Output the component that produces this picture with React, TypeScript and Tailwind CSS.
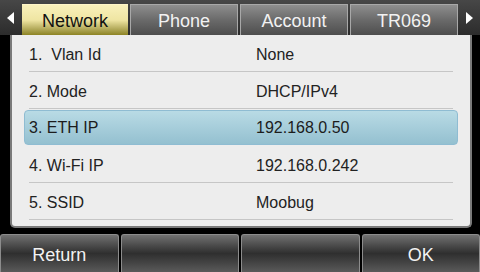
const tabs = ["Network", "Phone", "Account", "TR069"];

const rows = [
  { label: "1.  Vlan Id", value: "None" },
  { label: "2. Mode", value: "DHCP/IPv4" },
  { label: "3. ETH IP", value: "192.168.0.50" },
  { label: "4. Wi-Fi IP", value: "192.168.0.242" },
  { label: "5. SSID", value: "Moobug" },
];

const selected = 2;

const softKeys = ["Return", "", "", "OK"];

export default function App() {
  return (
    <div className="w-[480px] h-[272px] bg-black overflow-hidden flex flex-col font-['Liberation_Sans',Arial,sans-serif]">
      {/* Tab bar */}
      <div className="h-[35px] flex items-end bg-gradient-to-b from-[#474747] to-[#2c2c2c]">
        <div className="w-[22px] h-full flex items-center justify-center">
          <svg width="8" height="12" viewBox="0 0 8 12">
            <path d="M7 0 L0 6 L7 12 Z" fill="#fff" />
          </svg>
        </div>
        <div className="flex-1 flex gap-[2px] h-[31px]">
          {tabs.map((t, i) => (
            <div
              key={t}
              className={
                i === 0
                  ? "flex-1 flex items-center justify-center pt-[3px] text-[18px] text-[#111] bg-gradient-to-b from-[#f9f1bb] via-[#efe5a2] to-[#8d8423] border-t border-[#fff6c8]"
                  : "flex-1 flex items-center justify-center pt-[3px] text-[18px] text-[#f2f2f2] bg-gradient-to-b from-[#8e8e8e] via-[#6a6a6a] to-[#4e4e4e] border border-b-0 border-[#a8a8a8]"
              }
            >
              {t}
            </div>
          ))}
        </div>
        <div className="w-[22px] h-full flex items-center justify-center">
          <svg width="8" height="12" viewBox="0 0 8 12">
            <path d="M1 0 L8 6 L1 12 Z" fill="#fff" />
          </svg>
        </div>
      </div>

      {/* Content panel */}
      <div className="ml-[10px] w-[462px] h-[193px] bg-[#ededed] border-x-2 border-b-2 border-[#7a7a7a] rounded-b-[5px] flex flex-col">
        {rows.map((r, i) => (
          <div key={r.label} className="h-[37px] px-[12px] flex flex-col">
            {i === selected ? (
              <div className="mt-[1px] h-[35px] flex items-center rounded-[4px] border border-[#8fbcd2] bg-gradient-to-b from-[#b9dbe5] to-[#94c0d0] text-[16px] text-[#1c1c1c]">
                <span className="w-[231px] pl-[4px] whitespace-pre">{r.label}</span>
                <span>{r.value}</span>
              </div>
            ) : (
              <div className="h-full flex flex-col">
                <div className="flex-1 flex items-center pt-[4px] text-[16px] text-[#222] px-[5px]">
                  <span className="w-[227px] whitespace-pre">{r.label}</span>
                  <span>{r.value}</span>
                </div>
                <div className="mx-[5px] h-px bg-[#c6c6c6]" />
              </div>
            )}
          </div>
        ))}
      </div>

      {/* Soft keys */}
      <div className="mt-auto h-[38px] grid grid-cols-4 gap-[2px]">
        {softKeys.map((k, i) => (
          <div
            key={i}
            className="flex items-center justify-center pt-[3px] text-[18px] text-[#f2f2f2] rounded-t-[3px] border border-b-0 border-[#8c8c8c] bg-gradient-to-b from-[#727272] via-[#2f2f2f] to-[#5a5a5a]"
          >
            {k}
          </div>
        ))}
      </div>
    </div>
  );
}
